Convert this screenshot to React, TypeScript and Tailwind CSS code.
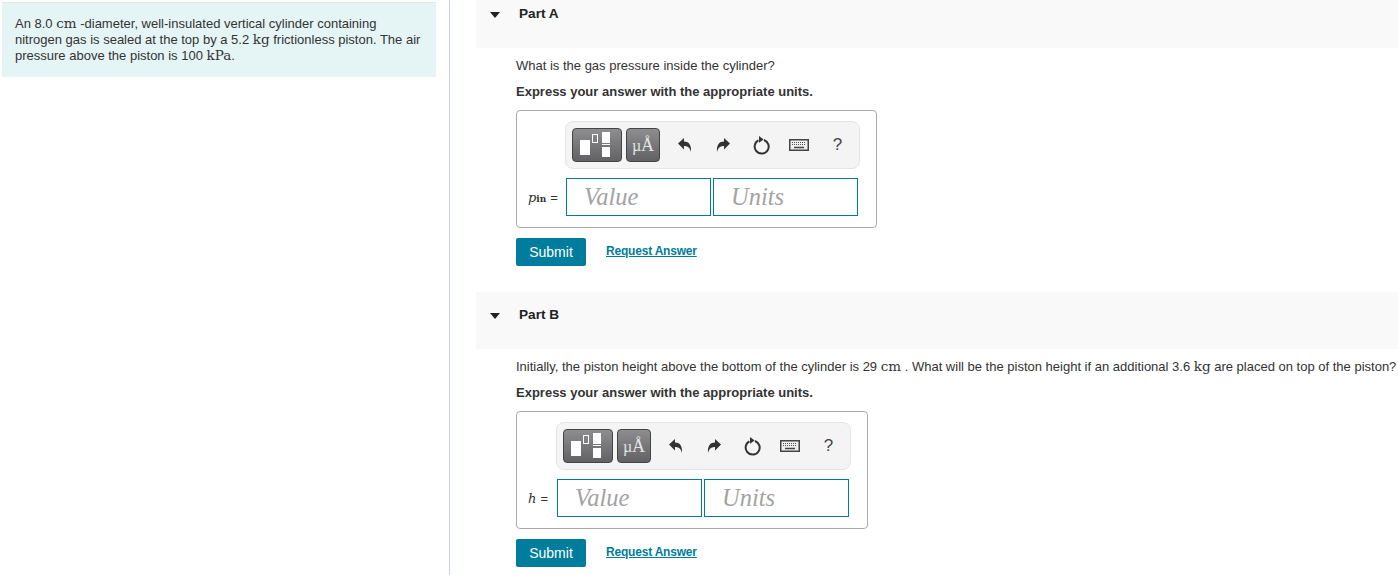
const Unit = ({ children }: { children: string }) => (
  <span className="font-['DejaVu_Serif',serif] text-[13.5px] leading-none text-[#333]">{children}</span>
);

const UndoIcon = ({ flip }: { flip?: boolean }) => (
  <svg width="14" height="15" viewBox="0 0 14 15" className={flip ? 'block -scale-x-100' : 'block'}>
    <path d="M0 5.5L6 0v3.5c4.6 0 7.6 3 7 10.5-1-4-3-6-7-6v3.5z" fill="#333" />
  </svg>
);

const KeyboardIcon = () => (
  <svg width="20" height="12" viewBox="0 0 20 12" className="block">
    <rect x="0.75" y="0.75" width="18.5" height="10.5" fill="#eee" stroke="#444" strokeWidth="1.5" />
    <path d="M3 3.5h14M3 5.5h14" stroke="#555" strokeWidth="1" strokeDasharray="1 1" />
    <path d="M5 8.5h10" stroke="#444" strokeWidth="1.5" />
  </svg>
);

const ResetIcon = () => (
  <svg width="18" height="20" viewBox="0 0 18 20" className="block">
    <path d="M6.4 5.4A7 7 0 1 0 12 5" fill="none" stroke="#333" strokeWidth="2" />
    <path d="M7 1l4.6 3.4L7 7.8z" fill="#333" />
  </svg>
);

const TemplatesIcon = () => (
  <svg width="50" height="34" viewBox="0 0 50 34" className="block">
    <rect x="7" y="11" width="10" height="15" fill="#fff" />
    <rect x="19.5" y="5.5" width="5" height="8" fill="none" stroke="#fff" />
    <rect x="29" y="3" width="8" height="11" fill="#fff" />
    <rect x="29" y="15" width="8" height="1" fill="#fff" />
    <rect x="29" y="18" width="8" height="10" fill="#fff" />
  </svg>
);

const Toolbar = () => (
  <div className="flex h-12 w-[295px] items-center rounded-lg border border-[#e4e4e4] bg-[#f4f4f4] pl-[6px]">
    <button className="h-[34px] w-[50px] rounded-[4px] border border-[#444] bg-gradient-to-b from-[#8e8e90] to-[#626264]">
      <TemplatesIcon />
    </button>
    <button className="ml-1 flex h-[34px] w-[34px] items-baseline justify-center rounded-[4px] border border-[#444] bg-gradient-to-b from-[#8e8e90] to-[#626264] pt-[3px] font-['Liberation_Serif',serif] text-[18px] text-[#e4e4e4]">
      <span className="text-[16px]">µ</span>Å
    </button>
    <div className="ml-[14px] flex w-[21px] justify-center"><UndoIcon /></div>
    <div className="ml-[17px] flex w-[21px] justify-center"><UndoIcon flip /></div>
    <div className="ml-[17px] flex w-[21px] justify-center"><ResetIcon /></div>
    <div className="ml-[17px] flex w-[21px] justify-center"><KeyboardIcon /></div>
    <div className="ml-[18px] flex w-[21px] justify-center text-[17px] text-[#444]">?</div>
  </div>
);

const AnswerBox = ({ label, labelWidth }: { label: React.ReactNode; labelWidth: string }) => (
  <div className="grid w-fit grid-cols-[auto_auto] rounded-[4px] border border-[#aaa] pb-[11px] pl-[11px] pr-4 pt-[10px]">
    <div className={labelWidth} />
    <Toolbar />
    <div className="mt-[9px] flex items-center pt-[2px] font-['DejaVu_Serif',serif] text-[#333]">{label}</div>
    <div className="mx-px mt-[9px] flex gap-[2px]">
      <input placeholder="Value" className="h-[38px] w-[145px] border border-[#007c9c] pl-[17px] font-['Liberation_Serif',serif] text-[24.5px] italic placeholder:text-[#a3a3a3]" />
      <input placeholder="Units" className="h-[38px] w-[145px] border border-[#007c9c] pl-[17px] font-['Liberation_Serif',serif] text-[24.5px] italic placeholder:text-[#a3a3a3]" />
    </div>
  </div>
);

const Actions = () => (
  <div className="mt-[10px] flex items-start">
    <button className="h-7 w-[70px] rounded-[2px] bg-[#007c9c] text-[14px] text-white">Submit</button>
    <a href="#" className="ml-5 mt-[5px] text-[12px] font-bold leading-4 tracking-[-0.2px] text-[#007c9c] underline">Request Answer</a>
  </div>
);

const PartHeader = ({ title, height }: { title: string; height: string }) => (
  <div className={`flex bg-[#f9f9f9] pt-[6px] ${height}`}>
    <span className="ml-[14px] mt-[6px] h-0 w-0 border-x-[5px] border-t-[6px] border-x-transparent border-t-[#222]" />
    <span className="ml-[19px] text-[13.6px] font-bold leading-4 text-[#222]">{title}</span>
  </div>
);

export default function App() {
  return (
    <div className="flex h-[575px] w-[1398px] overflow-hidden bg-white font-['Liberation_Sans',Arial,sans-serif] text-[13px] text-[#333]">
      {/* Problem statement */}
      <div className="h-full w-[450px] shrink-0 border-r border-[#c7d0dc] pl-[2px] pt-[2px]">
        <div className="h-[75px] w-[434px] border-t border-[#e2e6e8] bg-[#e5f5f6] px-[13px] pt-[13px] leading-4">
          An 8.0 <Unit>cm</Unit> -diameter, well-insulated vertical cylinder containing nitrogen gas is sealed at the top by a 5.2 <Unit>kg</Unit> frictionless piston. The air pressure above the piston is 100 <Unit>kPa</Unit>.
        </div>
      </div>

      {/* Parts */}
      <div className="min-w-0 flex-1 pl-[26px]">
        <PartHeader title="Part A" height="h-12" />
        <div className="pl-10">
          <p className="mt-[10px] leading-4 whitespace-nowrap">What is the gas pressure inside the cylinder?</p>
          <p className="my-[10px] font-bold leading-4">Express your answer with the appropriate units.</p>
          <AnswerBox
            labelWidth="w-[37px]"
            label={<><i className="text-[13px]">p</i><b className="mt-[3px] text-[9px]">in</b><span className="ml-1 font-['Liberation_Sans',sans-serif] text-[13px]">=</span></>}
          />
          <Actions />
        </div>

        <div className="mt-[26px]">
          <PartHeader title="Part B" height="h-[57px] pt-[15px]" />
        </div>
        <div className="pl-10">
          <p className="mt-[10px] leading-4 whitespace-nowrap">
            Initially, the piston height above the bottom of the cylinder is 29 <Unit>cm</Unit> . What will be the piston height if an additional 3.6 <Unit>kg</Unit> are placed on top of the piston?
          </p>
          <p className="my-[10px] font-bold leading-4">Express your answer with the appropriate units.</p>
          <AnswerBox
            labelWidth="w-[28px]"
            label={<><i className="text-[13px]">h</i><span className="ml-1 font-['Liberation_Sans',sans-serif] text-[13px]">=</span></>}
          />
          <Actions />
        </div>
      </div>
    </div>
  );
}
